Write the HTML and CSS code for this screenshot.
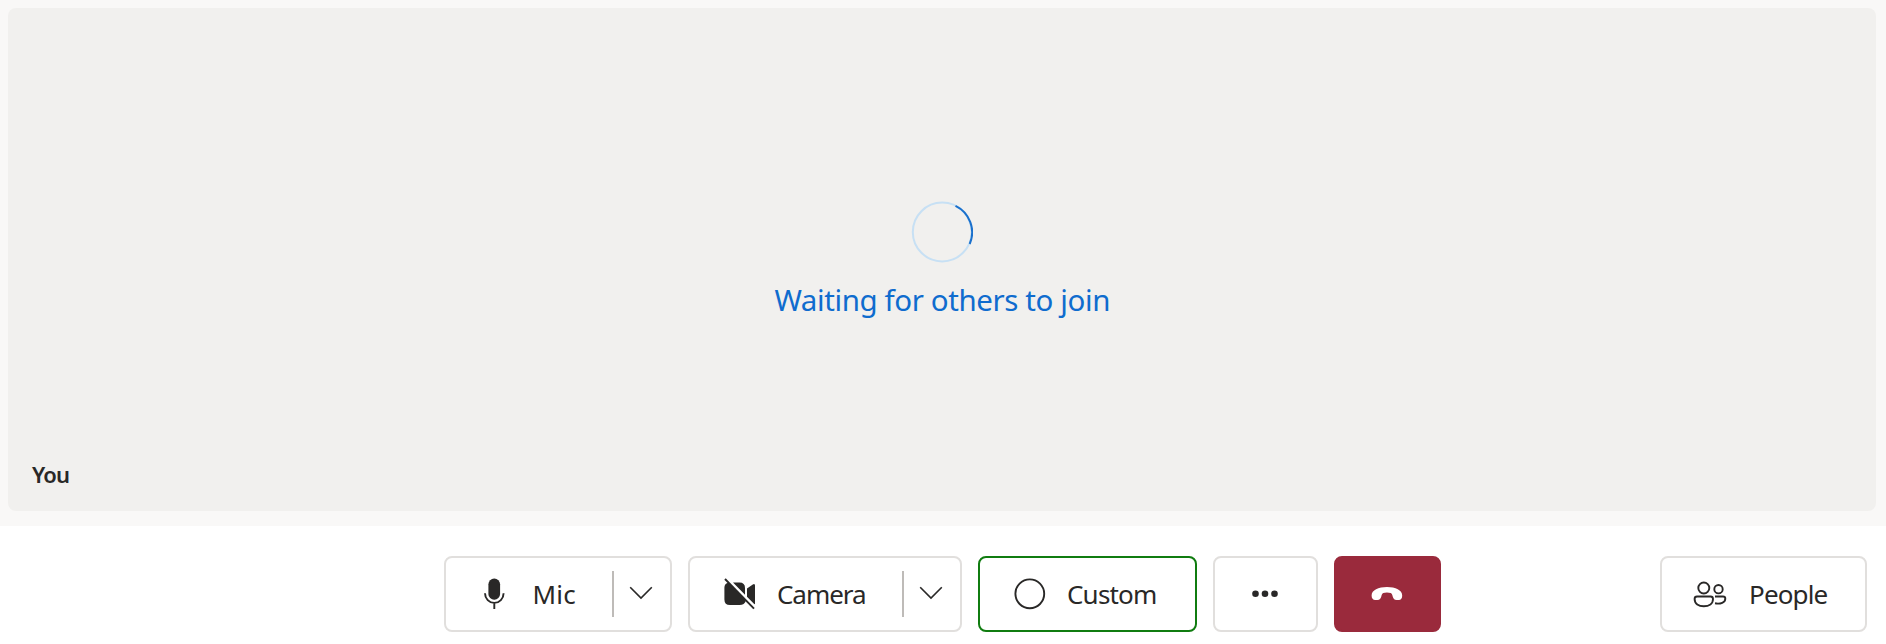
FILE: index.html
```html
<!DOCTYPE html>
<html lang="en">
<head>
<meta charset="utf-8">
<title>Call</title>
<link rel="stylesheet" href="styles.css">
</head>
<body>
<main class="stage">
  <section class="tile">
    <div class="waiting">
      <svg class="spinner" viewBox="0 0 62 62"><circle class="track" cx="31.200" cy="31" r="29.400"/><path class="arc" d="M44.500 4.800A29.400 29.400 0 0 1 58.700 43"/></svg>
      <p class="status">Waiting for others to join</p>
    </div>
    <span class="name">You</span>
  </section>
</main>
<footer class="bar">
  <div class="controls">
    <div class="btn mic">
      <svg class="icon" viewBox="0 0 32 32"><rect x="10.4" y=".5" width="11.7" height="21.3" rx="5.8"/><path class="line" d="M7 15.3a9.3 9.6 0 0 0 18.6 0M16.3 25v6"/></svg>
      <span class="label">Mic</span>
      <span class="split"><svg class="chevron" viewBox="0 0 24 14"><path d="M1.2 1.2 12 12 22.8 1.2"/></svg></span>
    </div>
    <div class="btn camera">
      <svg class="icon" viewBox="0 0 32 32"><path d="M4.600 4.700 22 22.500Q20.500 27 15.500 27H6Q.4 27 .4 21.500V9.500Q.4 5.500 4.600 4.700ZM9 4.500H15.500Q21 4.500 21 10V16.700ZM23 10.500 28.800 6.400Q31 5.200 31 7.500V25.500Q31 26.500 30.200 26.100L23 18.800Z"/><path class="line" d="M1 1 30 30.600"/></svg>
      <span class="label">Camera</span>
      <span class="split"><svg class="chevron" viewBox="0 0 24 14"><path d="M1.2 1.2 12 12 22.8 1.2"/></svg></span>
    </div>
    <div class="btn custom">
      <svg class="icon" viewBox="0 0 32 32"><circle class="line" cx="15.8" cy="15.8" r="14.4"/></svg>
      <span class="label">Custom</span>
    </div>
    <div class="btn more">
      <svg class="icon" viewBox="0 0 32 32"><circle cx="6.5" cy="15.8" r="3.3"/><circle cx="16" cy="15.8" r="3.3"/><circle cx="25.5" cy="15.8" r="3.3"/></svg>
    </div>
    <div class="btn hangup">
      <svg class="icon" viewBox="0 0 32 32"><path d="M16 9C24.500 9 31.200 12 31.200 17.500 31.200 20.500 30 21.900 27.800 21.900H25.500C23.300 21.900 22.200 20.500 21.700 18.500 21.300 16.500 20.800 15.500 19.700 15 17.500 14.300 14.300 14.300 12.300 15 11.200 15.500 10.700 16.500 10.300 18.500 9.800 20.500 8.700 21.900 6.500 21.900H4.200C2 21.900 .6 20.500 .6 17.500 .6 12 7.500 9 16 9Z"/></svg>
    </div>
  </div>
  <div class="btn people">
    <svg class="icon wide" viewBox="0 0 34 32"><g class="line"><circle cx="10.800" cy="10" r="5.500"/><circle cx="25.500" cy="11.200" r="4.200"/><path d="M4 18.500H17.600Q20 18.500 20 21C20 25.700 16 28.300 10.800 28.300S1.600 25.700 1.600 21Q1.600 18.500 4 18.500ZM22 18.500H30Q32.300 18.500 32.300 20.700C32.300 24.500 27.500 26.300 22 25.300"/></g></svg>
    <span class="label">People</span>
  </div>
</footer>
</body>
</html>
```
FILE: styles.css
```css
* { box-sizing: border-box; }
body { margin: 0; height: 644px; background: #fff; color: #292827; font-family: "Noto Sans", "Open Sans", sans-serif; display: flex; flex-direction: column; overflow: hidden; }
.stage { height: 526px; padding: 8px 10px 15px 8.4px; background: #f9f8f7; }
.tile { height: 503px; border-radius: 8px; background: #f1f0ee; display: grid; grid-template-rows: 450px 1fr; }
.waiting { padding-top: 193px; display: flex; flex-direction: column; align-items: center; }
.spinner { width: 62px; height: 62px; fill: none; stroke-width: 2; }
.track { stroke: #c7e0f4; }
.arc { stroke: #1a70cc; }
.status { margin: 17px 0 0; font-size: 29.5px; line-height: 40px; letter-spacing: -.4px; color: #0f6cce; white-space: nowrap; }
.name { padding-left: 23.5px; font-size: 22px; line-height: 32px; font-weight: 600; letter-spacing: -.8px; }
.bar { height: 118px; padding: 30px 19px 0 444.4px; display: flex; justify-content: space-between; align-items: flex-start; }
.controls { display: flex; gap: 16px; }
.btn { height: 76px; border: 2px solid #e1dfdd; border-radius: 8px; display: flex; align-items: center; background: #fff; }
.icon { width: 32px; height: 32px; flex: none; fill: #292827; }
.icon.wide { width: 34px; }
.line { fill: none; stroke: #292827; stroke-width: 1.9; }
.label { padding-left: 21px; font-size: 26px; line-height: 36px; letter-spacing: -.8px; white-space: nowrap; }
.mic { width: 227.6px; padding-left: 31.6px; }
.mic .label { padding-left: 22.5px; letter-spacing: .2px; }
.camera { width: 274px; padding-left: 34px; }
.camera .label { letter-spacing: -1.05px; }
.custom { width: 219px; padding-left: 34px; border-color: #107c10; }
.more { width: 105px; justify-content: center; }
.hangup { width: 107px; justify-content: center; border-color: #9a2a3c; background: #9a2a3c; }
.hangup .icon { fill: #fff; }
.people { width: 207px; padding-left: 31px; }
.people .label { padding-left: 22px; letter-spacing: -.85px; }
.split { width: 58px; height: 46px; margin-left: auto; border-left: 2px solid #bebbb8; display: flex; align-items: center; padding-left: 15.5px; }
.chevron { width: 24px; height: 14px; margin-bottom: 3px; fill: none; stroke: #292827; stroke-width: 1.6; }
```
